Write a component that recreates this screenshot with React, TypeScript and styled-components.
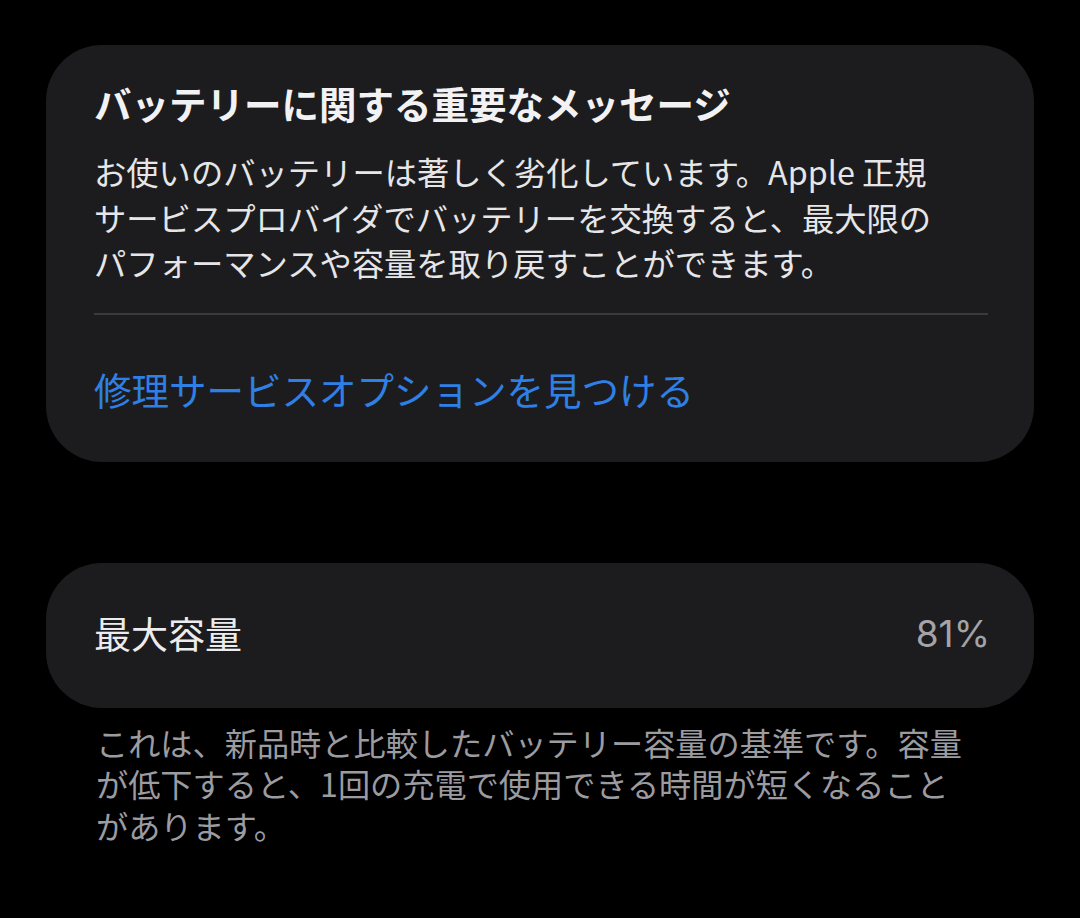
import React from "react";
import styled, { createGlobalStyle } from "styled-components";

const GlobalStyle = createGlobalStyle`
  html, body {
    margin: 0;
    padding: 0;
    background: #000;
  }
  body {
    font-family: "Noto Sans CJK JP", "Noto Sans", sans-serif;
    -webkit-font-smoothing: antialiased;
  }
`;

const Page = styled.div`
  width: 1080px;
  height: 918px;
  background: #000;
  padding: 45px 46px 0;
  box-sizing: border-box;
  display: flex;
  flex-direction: column;
`;

const Card = styled.section<{ $compact?: boolean }>`
  background: #1c1c1e;
  border-radius: 56px;
  padding: ${(p) => (p.$compact ? "0 44px 0 48px" : "34px 46px 49px 48px")};
  display: flex;
  flex-direction: column;
`;

const Title = styled.h2`
  margin: 0;
  font-size: 37.5px;
  line-height: 48px;
  font-weight: 700;
  color: #f2f2f4;
`;

const Body = styled.p`
  margin: 22px 0 0;
  font-size: 32.3px;
  line-height: 45.5px;
  color: #e6e6e9;
`;

const Divider = styled.hr`
  margin: 27px 0 0;
  border: none;
  height: 2px;
  background: #3a3a3c;
`;

const Link = styled.a`
  margin-top: 50px;
  font-size: 37.5px;
  line-height: 48px;
  color: #2f80e6;
  text-decoration: none;
`;

const Spacer = styled.div`
  height: 101px;
`;

const Row = styled.div`
  height: 145px;
  display: flex;
  align-items: center;
  justify-content: space-between;
  padding-bottom: 4px;
  box-sizing: border-box;
`;

const Label = styled.span`
  font-size: 37px;
  color: #ececef;
`;

const Value = styled.span`
  font-family: "Inter", "Noto Sans CJK JP", sans-serif;
  font-size: 37px;
  color: #a3a3a8;
`;

const Footnote = styled.p`
  margin: 14px 0 0;
  padding-left: 50px;
  font-size: 32.2px;
  line-height: 41.5px;
  color: #9b9ba0;
`;

export default function App(): JSX.Element {
  return (
    <>
      <GlobalStyle />
      <Page>
        <Card>
          <Title>バッテリーに関する重要なメッセージ</Title>
          <Body>
            お使いのバッテリーは著しく劣化しています。Apple 正規
            <br />
            サービスプロバイダでバッテリーを交換すると、最大限の
            <br />
            パフォーマンスや容量を取り戻すことができます。
          </Body>
          <Divider />
          <Link href="#">修理サービスオプションを見つける</Link>
        </Card>
        <Spacer />
        <Card $compact>
          <Row>
            <Label>最大容量</Label>
            <Value>81%</Value>
          </Row>
        </Card>
        <Footnote>
          これは、新品時と比較したバッテリー容量の基準です。容量
          <br />
          が低下すると、1回の充電で使用できる時間が短くなること
          <br />
          があります。
        </Footnote>
      </Page>
    </>
  );
}
